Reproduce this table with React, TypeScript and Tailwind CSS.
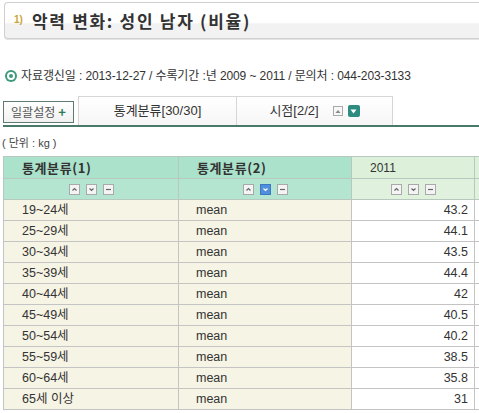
import React from "react";

const FONT = "font-['Liberation_Sans','Noto_Sans_CJK_KR',sans-serif]";

function SmallBtn({ kind, active }: { kind: "up" | "down" | "minus"; active?: boolean }) {
  return (
    <span
      className={`inline-flex items-center justify-center w-[11px] h-[11px] border ${
        active ? "bg-[#4f8fdc] border-[#3c78c4]" : "bg-[#f4f4f4] border-[#a9a9a9]"
      }`}
    >
      <svg width="7" height="7" viewBox="0 0 7 7">
        {kind === "up" && <polyline points="1.5,4.5 3.5,2.5 5.5,4.5" fill="none" stroke={active ? "#fff" : "#666"} strokeWidth="1.2" />}
        {kind === "down" && <polyline points="1.5,2.5 3.5,4.5 5.5,2.5" fill="none" stroke={active ? "#fff" : "#666"} strokeWidth="1.2" />}
        {kind === "minus" && <line x1="1" y1="3.5" x2="6" y2="3.5" stroke="#666" strokeWidth="1.2" />}
      </svg>
    </span>
  );
}

function IconGroup({ active }: { active?: boolean }) {
  return (
    <div className="flex items-center justify-center gap-[6px]">
      <SmallBtn kind="up" />
      <SmallBtn kind="down" active={active} />
      <SmallBtn kind="minus" />
    </div>
  );
}

const rows: [string, string][] = [
  ["19~24세", "43.2"],
  ["25~29세", "44.1"],
  ["30~34세", "43.5"],
  ["35~39세", "44.4"],
  ["40~44세", "42"],
  ["45~49세", "40.5"],
  ["50~54세", "40.2"],
  ["55~59세", "38.5"],
  ["60~64세", "35.8"],
  ["65세 이상", "31"],
];

export default function App() {
  return (
    <div className={`w-[479px] h-[413px] overflow-hidden bg-white text-[#333] ${FONT}`}>
      {/* Title */}
      <div className="pt-[2px] pl-[4px]">
        <div className="h-[37px] border border-r-0 border-[#cfcfcf] rounded-l-[4px] bg-[linear-gradient(to_bottom,#ffffff_0%,#ffffff_55%,#f2f2f2_60%,#f2f2f2_100%)] shadow-[0_1px_0_#e4e4e4] flex items-center pl-[9px]">
          <span className="text-[10px] text-[#c9a53a] font-bold mr-[9px] -mt-[3px]">1)</span>
          <span className="text-[17px] font-bold tracking-[1.7px] text-[#333] font-['Noto_Sans_CJK_KR',sans-serif]">
            악력 변화: 성인 남자 (비율)
          </span>
        </div>
      </div>

      {/* Info line */}
      <div className="mt-[29px] pl-[5px] h-[16px] flex items-center text-[12px] text-[#333]">
        <span className="w-[12px] h-[12px] rounded-full bg-[#3f9a7d] flex items-center justify-center mr-[4px]">
          <span className="w-[8px] h-[8px] rounded-full bg-white flex items-center justify-center">
            <span className="w-[4px] h-[4px] rounded-full bg-[#3f9a7d]" />
          </span>
        </span>
        <span className="tracking-[-0.1px]">자료갱신일 : 2013-12-27 / 수록기간 :년 2009 ~ 2011 / 문의처 : 044-203-3133</span>
      </div>

      {/* Tab bar */}
      <div className="mt-[12px] ml-[3px] h-[31px] border-b-2 border-[#4a7869] flex items-end">
        <div className="self-center mt-[2px] h-[22px] w-[71px] border border-[#5f7a70] bg-[linear-gradient(to_bottom,#ffffff,#f1f1f1)] flex items-center justify-center text-[12px] text-[#555] font-['Noto_Sans_CJK_KR',sans-serif]">
          일괄설정
          <span className="ml-[3px] text-[#2f7a55] font-bold text-[13px] leading-none">+</span>
        </div>
        <div className="ml-[4px] h-[29px] w-[158px] border-t border-l border-[#d6d6d6] bg-[linear-gradient(to_bottom,#ffffff,#f6f6f6)] flex items-center justify-center text-[13px] text-[#333]">
          통계분류[30/30]
        </div>
        <div className="h-[29px] w-[157px] border-t border-l border-r border-[#d6d6d6] bg-[linear-gradient(to_bottom,#ffffff,#f6f6f6)] flex items-center justify-center text-[13px] text-[#333]">
          <span>시점[2/2]</span>
          <span className="ml-[14px] w-[10px] h-[10px] border border-[#aaa] bg-[#f7f7f7] flex items-center justify-center">
            <svg width="6" height="5" viewBox="0 0 6 5"><polygon points="3,1 5.5,4 0.5,4" fill="#888" /></svg>
          </span>
          <span className="ml-[5px] w-[12px] h-[12px] rounded-[2px] bg-[#2e8b80] flex items-center justify-center">
            <svg width="7" height="5" viewBox="0 0 7 5"><polygon points="0.5,0.5 6.5,0.5 3.5,4.5" fill="#fff" /></svg>
          </span>
        </div>
      </div>

      {/* Unit */}
      <div className="mt-[8px] pl-[2px] h-[16px] flex items-center text-[11px] text-[#444]">( 단위 : kg )</div>

      {/* Table */}
      <div className="mt-[5px] ml-[3px] w-[540px]">
        <table className="border-collapse table-fixed w-[531px] text-[12.5px]">
          <colgroup>
            <col className="w-[175px]" />
            <col className="w-[173px]" />
            <col className="w-[123px]" />
            <col className="w-[60px]" />
          </colgroup>
          <thead>
            <tr className="h-[22px]">
              <th className="border border-[#b7c9bf] bg-[#abe2cb] text-left pl-[18px] font-bold text-[13px] tracking-[0.6px] font-['Noto_Sans_CJK_KR',sans-serif] text-[#333]">통계분류(1)</th>
              <th className="border border-[#b7c9bf] bg-[#abe2cb] text-left pl-[18px] font-bold text-[13px] tracking-[0.6px] font-['Noto_Sans_CJK_KR',sans-serif] text-[#333]">통계분류(2)</th>
              <th className="border border-[#b7c9bf] bg-[#ddf0da] text-left pl-[18px] font-normal text-[12px]">2011</th>
              <th className="border border-[#b7c9bf] bg-[#ddf0da]"></th>
            </tr>
            <tr className="h-[21px]">
              <td className="border border-[#b7c9bf] bg-[#b3e5d0]"><IconGroup /></td>
              <td className="border border-[#b7c9bf] bg-[#b3e5d0]"><IconGroup active /></td>
              <td className="border border-[#b7c9bf] bg-[#e0f1de]"><IconGroup /></td>
              <td className="border border-[#b7c9bf] bg-[#e0f1de]"></td>
            </tr>
          </thead>
          <tbody>
            {rows.map(([a, v]) => (
              <tr key={a} className="h-[21px]">
                <td className="border border-[#c4c4c4] bg-[#f6f4e5] pl-[18px] text-[#333]">{a}</td>
                <td className="border border-[#c4c4c4] bg-[#f6f4e5] pl-[17px] text-[#333]">mean</td>
                <td className="border border-[#c4c4c4] bg-white text-right pr-[6px] text-[#333]">{v}</td>
                <td className="border border-[#c4c4c4] bg-white"></td>
              </tr>
            ))}
          </tbody>
        </table>
      </div>
    </div>
  );
}
